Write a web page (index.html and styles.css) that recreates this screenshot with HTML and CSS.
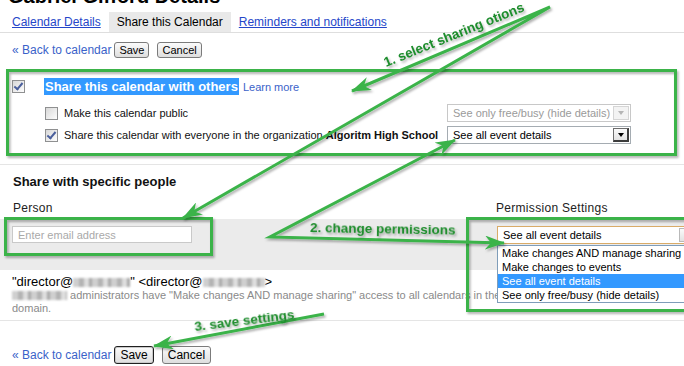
FILE: index.html
```html
<!DOCTYPE html>
<html lang="en">
  <head>
    <meta charset="UTF-8" />
    <meta name="viewport" content="width=device-width, initial-scale=1.0" />
    <title>Gabriel Gifford Details</title>
    <link rel="stylesheet" href="styles.css">
  </head>
  <body>
    <div class="page">
      <h1 class="title">Gabriel Gifford Details</h1>

      <div class="tabs">
        <a href="#" class="tab">Calendar Details</a>
        <span class="tab active">Share this Calendar</span>
        <a href="#" class="tab">Reminders and notifications</a>
      </div>

      <div class="actions">
        <a href="#" class="back">« Back to calendar</a>
        <button class="btn">Save</button>
        <button class="btn">Cancel</button>
      </div>

      <div class="share-main">
        <div class="main-row">
          <span class="cb on"></span>
          <span class="selected-text">Share this calendar with others</span>
          <a href="#" class="learn">Learn more</a>
        </div>
        <div class="option-row first">
          <label class="opt"><span class="cb"></span>Make this calendar public</label>
          <div class="select disabled">
            <span class="select-text">See only free/busy (hide details)</span>
            <span class="select-btn"></span>
          </div>
        </div>
        <div class="option-row">
          <label class="opt"><span class="cb on"></span><span>Share this calendar with everyone in the organization <b>Algoritm High School</b></span></label>
          <div class="select">
            <span class="select-text">See all event details</span>
            <span class="select-btn dark"></span>
          </div>
        </div>
      </div>

      <div class="people">
        <h2>Share with specific people</h2>
        <div class="people-head">
          <span>Person</span>
          <span>Permission Settings</span>
        </div>
        <div class="add-row">
          <input type="text" class="email" placeholder="Enter email address" />
          <div class="perm">
            <div class="select focused">
              <span class="select-text">See all event details</span>
              <span class="select-btn"></span>
            </div>
            <ul class="menu">
              <li>Make changes AND manage sharing</li>
              <li>Make changes to events</li>
              <li class="hl">See all event details</li>
              <li>See only free/busy (hide details)</li>
            </ul>
          </div>
        </div>
        <div class="person">
          <div class="person-name">"director@<span class="blur name-a"></span>" &lt;director@<span class="blur name-b"></span>&gt;</div>
          <div class="person-note"><span class="blur note-a"></span> administrators have "Make changes AND manage sharing" access to all calendars in the domain.</div>
        </div>
      </div>

      <div class="actions bottom">
        <a href="#" class="back">« Back to calendar</a>
        <button class="btn default">Save</button>
        <button class="btn">Cancel</button>
      </div>

      <!-- annotations drawn over the screenshot -->
      <svg class="notes" width="684" height="366" viewBox="0 0 684 366">
        <defs>
          <filter id="shade" x="-20%" y="-20%" width="140%" height="140%">
            <feDropShadow dx="1.5" dy="2" stdDeviation="0.8" flood-color="#000" flood-opacity="0.3" />
          </filter>
          <marker id="head" viewBox="0 0 20 14" refX="19" refY="7" markerWidth="20" markerHeight="14" markerUnits="userSpaceOnUse" orient="auto-start-reverse">
            <path d="M0 0 L20 7 L0 14 L6 7 Z" fill="#3bb34a" />
          </marker>
        </defs>
        <g fill="none" stroke="#3bb34a" stroke-width="3" filter="url(#shade)">
          <rect x="7.5" y="70.5" width="668" height="84" />
          <rect x="5.5" y="218.5" width="206" height="36" />
          <rect x="467.5" y="218.5" width="300" height="92" />
        </g>
        <g fill="none" stroke="#3bb34a" stroke-width="3" stroke-linejoin="miter" filter="url(#shade)">
          <path d="M352 91 L550 7 L183 218" marker-start="url(#head)" marker-end="url(#head)" />
          <path d="M455 140 L270 237 L504 243" marker-start="url(#head)" marker-end="url(#head)" />
          <path d="M324 314 L154 346" marker-end="url(#head)" />
        </g>
        <g class="note-text" filter="url(#shade)">
          <text transform="translate(386 67) rotate(-22)">1. select sharing otions</text>
          <text transform="translate(310 232) rotate(1)">2. change permissions</text>
          <text transform="translate(195 331) rotate(-7)">3. save settings</text>
        </g>
      </svg>
    </div>
  </body>
</html>
```

FILE: styles.css
```css
* {
  box-sizing: border-box;
}
html,
body {
  margin: 0;
  overflow: hidden;
}
body {
  background: #fff;
  color: #111;
  font-family: "Liberation Sans", Arial, sans-serif;
  font-size: 11px;
}
.page {
  position: relative;
  width: 684px;
  height: 366px;
  overflow: hidden;
}
.title {
  margin: -16px 0 4px 8px;
  font-size: 20px;
  line-height: 24px;
  color: #000;
}

/* tabs */
.tabs {
  display: flex;
  height: 21px;
  padding-left: 4px;
  border-bottom: 1px solid #dedede;
}
.tab {
  padding: 0 8px;
  font-size: 12px;
  line-height: 20px;
  color: #2546c9;
  text-decoration: underline;
}
.tab.active {
  background: #e9e9e9;
  color: #000;
  text-decoration: none;
}

/* back / save / cancel */
.actions {
  display: flex;
  align-items: center;
  height: 16px;
  margin-top: 9px;
  padding-left: 12px;
}
.back {
  font-size: 12px;
  color: #3a62c9;
  text-decoration: none;
  margin-right: 3px;
}
.btn {
  height: 16px;
  padding: 0 4px;
  font-family: "Liberation Sans", Arial, sans-serif;
  font-size: 11px;
  color: #000;
  border: 1px solid #7b7b7b;
  border-radius: 3px;
  background: linear-gradient(#fbfbfb, #dedede);
}
.btn + .btn {
  margin-left: 8px;
}
.actions.bottom {
  height: 18px;
  margin-top: 25px;
}
.actions.bottom .btn {
  height: 18px;
  padding: 0 5px;
  font-size: 12px;
}
.btn.default {
  border-color: #1f1f1f;
  box-shadow: inset 0 0 0 1px #c9c9c9;
}

/* sharing options */
.share-main {
  padding: 20px 0 20px 12px;
  border-bottom: 1px solid #e5e5e5;
}
.main-row {
  display: flex;
  align-items: center;
  height: 17px;
}
.selected-text {
  margin-left: 19px;
  padding: 0 1px;
  background: #3399ff;
  color: #fff;
  font-size: 13px;
  font-weight: bold;
  line-height: 17px;
}
.learn {
  margin-left: 4px;
  color: #3a62c9;
  text-decoration: none;
}
.option-row {
  display: grid;
  grid-template-columns: 402px 184px;
  height: 18px;
  margin: 4px 0 0 33px;
}
.option-row.first {
  margin-top: 9px;
}
.opt {
  display: flex;
  align-items: center;
  gap: 6px;
  color: #111;
}
.cb {
  flex: none;
  display: inline-flex;
  align-items: center;
  justify-content: center;
  width: 13px;
  height: 13px;
  border: 1px solid #8f9091;
  background: linear-gradient(135deg, #d8d8d8, #fdfdfd);
}
.cb.on::after {
  content: "";
  width: 3px;
  height: 7px;
  margin-top: -2px;
  border: solid #4a5f9c;
  border-width: 0 2px 2px 0;
  transform: rotate(40deg);
}

/* select boxes */
.select {
  display: flex;
  align-items: center;
  height: 18px;
  padding: 1px;
  border: 1px solid #a5acb2;
  background: #fff;
  color: #000;
}
.select-text {
  flex: 1;
  padding-left: 4px;
  white-space: nowrap;
  overflow: hidden;
}
.select-btn {
  flex: none;
  display: flex;
  align-items: center;
  justify-content: center;
  width: 16px;
  height: 100%;
  border: 1px solid #b9b9b9;
  background: linear-gradient(#fafafa, #e2e2e2);
}
.select-btn::after {
  content: "";
  border-left: 3.5px solid transparent;
  border-right: 3.5px solid transparent;
  border-top: 4px solid #000;
}
.select-btn.dark {
  border-color: #6d6d6d #3c3c3c #3c3c3c #6d6d6d;
  border-width: 1px 2px 2px 1px;
}
.select.disabled {
  color: #9a9a9a;
  border-color: #c8c8c8;
}
.select.disabled .select-btn {
  border-color: #d5d5d5;
  background: #f3f3f3;
}
.select.disabled .select-btn::after {
  border-top-color: #b5b5b5;
}

/* share with specific people */
.people h2 {
  margin: 9px 0 0 13px;
  font-size: 13px;
  line-height: 16px;
  color: #111;
}
.people-head {
  display: grid;
  grid-template-columns: 483px auto;
  height: 19px;
  margin-top: 10px;
  padding-left: 13px;
  font-size: 12px;
  line-height: 16px;
  letter-spacing: 0.3px;
  color: #222;
}
.add-row {
  display: grid;
  grid-template-columns: 485px 1fr;
  height: 51px;
  padding: 7px 0 0 12px;
  background: #ebebeb;
}
.email {
  width: 180px;
  height: 17px;
  padding: 0 5px;
  border: 1px solid #c9c9c9;
  font-family: "Liberation Sans", Arial, sans-serif;
  font-size: 11px;
  outline: none;
}
.email::placeholder {
  color: #a9a9a9;
}
.perm {
  position: relative;
}
.select.focused {
  width: 200px;
  border-color: #d9ab68;
}
.menu {
  position: absolute;
  top: 19px;
  left: 0;
  width: 200px;
  margin: 0;
  padding: 0;
  list-style: none;
  background: #fff;
  border: 1px solid #7f9db9;
  color: #000;
}
.menu li {
  height: 14px;
  padding-left: 4px;
  line-height: 14px;
  white-space: nowrap;
}
.menu li.hl {
  background: #3399ff;
  color: #fff;
}
.person {
  padding: 4px 12px 5px;
  border-bottom: 1px solid #e5e5e5;
}
.person-name {
  font-size: 13px;
  line-height: 15px;
  color: #000;
}
.person-note {
  width: 500px;
  font-size: 11px;
  line-height: 13px;
  color: #8a8a8a;
}
.blur {
  display: inline-block;
  height: 9px;
  vertical-align: -1px;
  background: repeating-linear-gradient(90deg, #cfcfcf 0 6px, #b3b3b3 6px 11px, #dedede 11px 16px, #a9a9a9 16px 19px);
  filter: blur(0.8px);
}
.name-a {
  width: 57px;
}
.name-b {
  width: 62px;
}
.note-a {
  width: 55px;
}

/* annotations */
.notes {
  position: absolute;
  top: 0;
  left: 0;
  pointer-events: none;
}
.note-text {
  fill: #1f8d2d;
  font-family: "Liberation Sans", Arial, sans-serif;
  font-size: 13.5px;
  font-weight: bold;
}
```
